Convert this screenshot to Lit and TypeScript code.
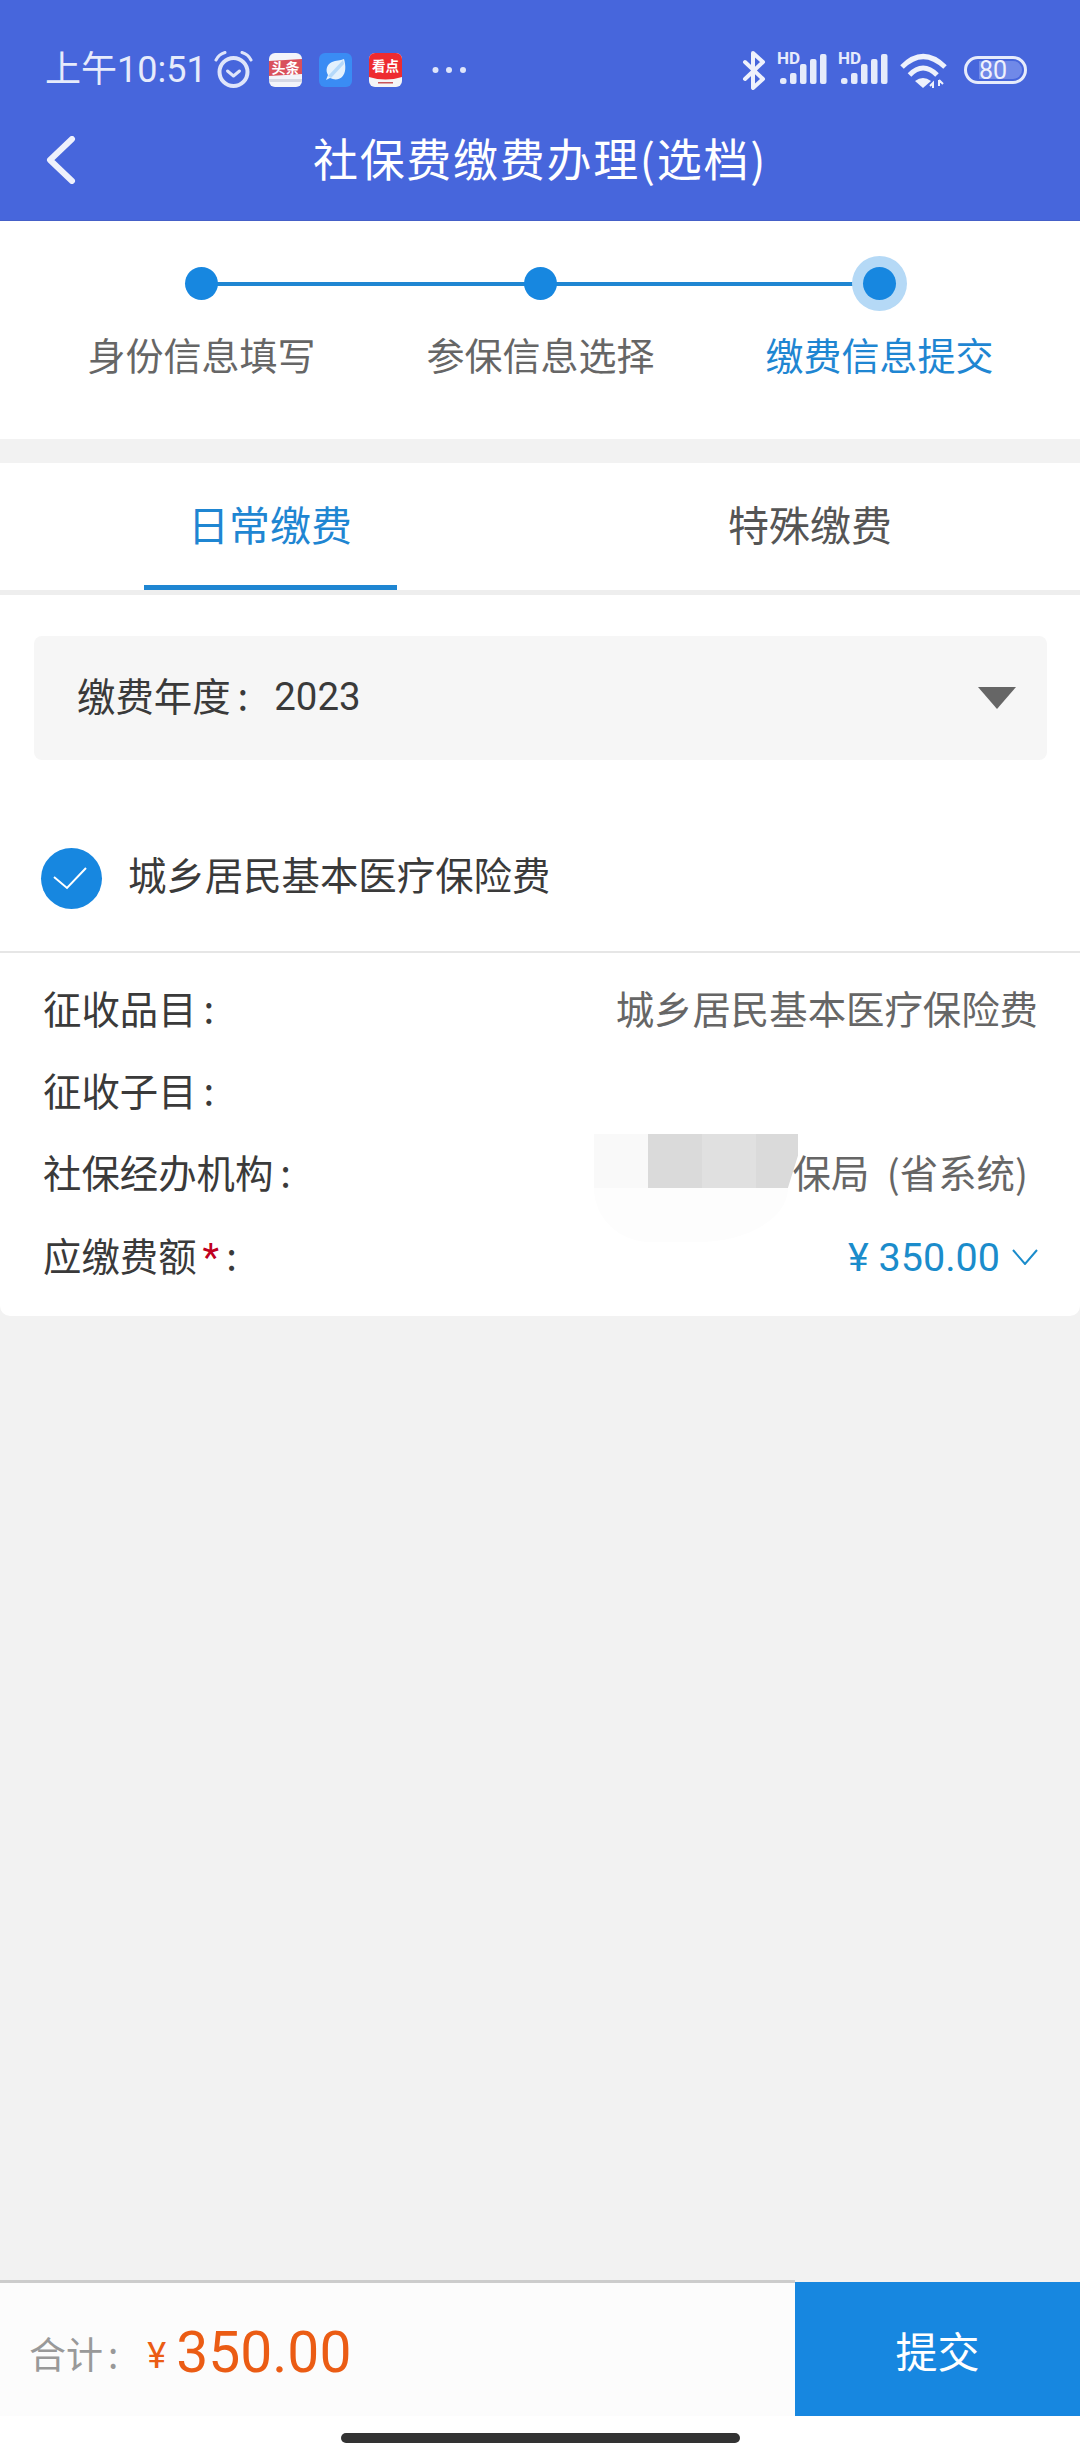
import { LitElement, html, css, svg } from 'lit';
import { customElement } from 'lit/decorators.js';

const CJK = `"Noto Sans CJK SC", sans-serif`;

const signal = svg`
  <text x="0" y="12" class="hd">HD</text>
  <rect x="3" y="26" width="6.500" height="6" rx="2.500"></rect>
  <rect x="13" y="21" width="6.500" height="11" rx="2"></rect>
  <rect x="23" y="12" width="6.500" height="20" rx="2"></rect>
  <rect x="33" y="7" width="6.500" height="25" rx="2"></rect>
  <rect x="43" y="2" width="6.500" height="30" rx="2"></rect>
`;

@customElement('app-root')
export class AppRoot extends LitElement {
  static styles = css`
    :host {
      display: block;
      width: 1080px;
      height: 2460px;
      background: #f2f2f2;
      font-family: "Noto Sans CJK SC", sans-serif;
      color: #3a3a3a;
      overflow: hidden;
    }
    .page { display: flex; flex-direction: column; height: 2460px; }

    /* header */
    .header { background: #4766dc; height: 221px; box-sizing: border-box; border-bottom: 1px solid #4560c8; padding-top: 40px; }
    .status { height: 60px; display: flex; align-items: center; padding: 0 53px 0 45px; color: #e6ebfb; }
    .time { font-size: 36px; line-height: 60px; font-family: Roboto, "Noto Sans CJK SC", sans-serif; width: 160px; white-space: nowrap; }
    .status svg { display: block; flex: none; }
    .alarm { margin-left: 9px; }
    .app { margin-left: 17px; }
    .app.first { margin-left: 16px; }
    .more { margin-left: 30px; }
    .spacer { flex: 1; }
    .status .sig { margin-left: 11px; fill: #e6ebfb; align-self: flex-start; margin-top: 7px; }
    .hd { font: 700 17px Roboto, sans-serif; }
    .wifi { margin-left: 12px; }
    .battery { margin-left: 17px; }
    .nav { height: 120px; display: grid; grid-template-columns: 100px 1fr 100px; align-items: center; }
    .back { margin-left: 46px; display: block; }
    .title { text-align: center; color: #fff; font-size: 45px; letter-spacing: 1.7px; white-space: nowrap; padding-bottom: 5px; }

    /* steps */
    .steps { background: #fff; height: 218px; display: grid; grid-template-columns: repeat(3, 339px); justify-content: center; padding-left: 1px; box-sizing: border-box; }
    .step { position: relative; display: flex; flex-direction: column; align-items: center; padding-top: 46px; }
    .dot { width: 33px; height: 33px; border-radius: 50%; background: #1787e0; position: relative; z-index: 1; }
    .step.on .dot { box-shadow: 0 0 0 11px #b5d9f6; }
    .step .rail { position: absolute; top: 61px; left: 50%; width: 100%; height: 4px; background: #1f86d2; }
    .step-label { margin-top: 27px; font-size: 38px; line-height: 54px; color: #666; white-space: nowrap; }
    .step.on .step-label { color: #1f86d2; }

    /* tabs */
    .tabs { margin-top: 24px; background: #fff; height: 132px; box-sizing: border-box; display: grid; grid-template-columns: 1fr 1fr; border-bottom: 5px solid #eee; }
    .tab { display: flex; justify-content: center; position: relative; font-size: 41px; line-height: 120px; color: #555; }
    .tab.on { color: #1f86d2; }
    .tab.on::after { content: ''; position: absolute; left: 144px; width: 253px; height: 5px; bottom: 0; background: #1f86d2; }

    /* body */
    .body { background: #fff; padding: 41px 0 0; border-radius: 0 0 10px 10px; font-size: 38.4px; }
    .select { margin: 0 33px 0 34px; height: 124px; border-radius: 8px; background: #f6f6f6; display: flex; align-items: center; justify-content: space-between; padding: 0 31px 0 43px; }
    .select .txt { display: flex; align-items: center; padding-bottom: 9px; }
    .select .year { font-family: Roboto, sans-serif; margin-left: 26px; padding-top: 5px; }
    .tri { width: 0; height: 0; border-left: 19px solid transparent; border-right: 19px solid transparent; border-top: 22px solid #666; }
    .check-row { height: 193px; box-sizing: border-box; border-bottom: 2px solid #e6e6e6; display: flex; align-items: center; padding: 45px 0 0 41px; gap: 26px; }
    .check-row .txt { padding-bottom: 10px; }
    .check { width: 61px; height: 61px; border-radius: 50%; background: #1787e0; display: block; flex: none; }
    .details { position: relative; padding: 16px 0 18px; }
    .row { height: 82.33px; padding: 0 42px 0 43px; display: flex; align-items: center; justify-content: space-between; white-space: nowrap; }
    .key, .val { padding-bottom: 7px; }
    .val { color: #666; }
    .colon { margin-left: 7px; }
    .office { word-spacing: 9px; margin-right: 10px; }
    .req { color: #c00020; margin-left: 6px; font-family: Roboto, sans-serif; }
    .fee { color: #1b8ccb; display: flex; align-items: center; font-family: Roboto, sans-serif; font-size: 39.5px; }
    .fee svg { margin-left: 12px; display: block; }
    .mosaic { position: absolute; left: 594px; top: 181px; width: 204px; height: 54px; display: flex; }
    .mosaic i { display: block; height: 54px; width: 54px; }
    .mosaic .a { background: #f9f9f9; }
    .mosaic .b { background: #dadada; }
    .mosaic .c { background: #e0e0e0; }
    .mosaic .d { background: #dadada; width: 42px; clip-path: polygon(0 0, 100% 0, 100% 40%, 76% 100%, 0 100%); }
    .smear { position: absolute; left: 594px; top: 235px; width: 194px; height: 54px; background: #fdfdfd; border-radius: 0 0 90px 56px / 0 0 54px 54px; }

    /* footer */
    .grow { flex: 1; }
    .footer { height: 136px; display: grid; grid-template-columns: 795px 285px; }
    .total { background: #fcfcfc; border-top: 3px solid #ccc; display: flex; align-items: baseline; padding: 41px 0 0 29px; box-sizing: border-box; white-space: nowrap; }
    .total .lab { font-size: 37px; color: #999; transform: translateY(-3px); }
    .total .lab i { font-style: normal; margin-left: 5px; }
    .total .yen { font: 36px Roboto, sans-serif; color: #eb5c14; margin-left: 29px; transform: translateY(-4px); }
    .total .num { font: 57px/57px Roboto, sans-serif; color: #eb5c14; margin-left: 10px; }
    .submit { margin-top: 2px; background: #1787e0; color: #fff; font-size: 42px; display: flex; align-items: center; justify-content: center; }
    .home { height: 44px; background: #fff; display: flex; justify-content: center; padding-top: 17px; box-sizing: border-box; }
    .home i { display: block; width: 399px; height: 10px; border-radius: 5px; background: #333; }
  `;

  renderStatus() {
    return html`
      <div class="status">
        <span class="time">上午10:51</span>
        <svg class="alarm" width="39" height="38" viewBox="0 0 39 38" fill="none" stroke="#dfe5fa">
          <circle cx="19.500" cy="21" r="14" stroke-width="4"></circle>
          <path d="M13.500 20l6 5 6-5" stroke-width="3" stroke-linecap="round" stroke-linejoin="round"></path>
          <path d="M2 9Q5 3 11 1.500M37 9Q34 3 28 1.500" stroke-width="3" stroke-linecap="round"></path>
        </svg>
        <svg class="app first" width="33" height="34" viewBox="0 0 33 34">
          <rect width="33" height="34" rx="6" fill="#f3f4fa"></rect>
          <path d="M0 8L33 6V21L0 23Z" fill="#d9505c"></path>
          <rect y="26" width="33" height="3" fill="#d6d8e4"></rect>
          <text x="16.500" y="20" text-anchor="middle" font-size="14" font-weight="700" fill="#fff" font-family=${CJK}>头条</text>
        </svg>
        <svg class="app" width="33" height="34" viewBox="0 0 33 34">
          <rect width="33" height="34" rx="6" fill="#3a8cf4"></rect>
          <path d="M25 6C27 13 27 20 23 24C20 27 15 27 11 25L7 27L9 22C6 17 8 11 13 9C17 7 21 8 25 6Z" fill="#e4f1fd"></path>
          <path d="M24 7L9 23L12 25L25 11Z" fill="#b5d9fa"></path>
        </svg>
        <svg class="app" width="33" height="34" viewBox="0 0 33 34">
          <rect width="33" height="34" rx="6" fill="#f5f5f7"></rect>
          <path d="M6 0H27A6 6 0 0 1 33 6V24Q16.500 29 0 24V6A6 6 0 0 1 6 0Z" fill="#ee2b30"></path>
          <text x="16.500" y="18" text-anchor="middle" font-size="13.500" font-weight="700" fill="#fff" font-family=${CJK}>看点</text>
          <rect x="9" y="29" width="15" height="1.500" fill="#c8565c"></rect>
        </svg>
        <svg class="more" width="34" height="8" viewBox="0 0 34 8" fill="#dfe5fa">
          <circle cx="3.500" cy="4" r="3"></circle><circle cx="17" cy="4" r="3"></circle><circle cx="31" cy="4" r="3"></circle>
        </svg>
        <span class="spacer"></span>
        <svg width="24" height="39" viewBox="0 0 24 39" fill="none" stroke="#eef1fc" stroke-width="4" stroke-linejoin="round" stroke-linecap="round">
          <path d="M3 11L21 28L11 37V2L21 11L3 28"></path>
        </svg>
        <svg class="sig" width="50" height="40" viewBox="0 -5 50 40">${signal}</svg>
        <svg class="sig" width="50" height="40" viewBox="0 -5 50 40">${signal}</svg>
        <svg class="wifi" width="47" height="35" viewBox="0 0 47 35" fill="none" stroke="#eef1fc" stroke-width="5">
          <path d="M2 14Q23 -7 45 14"></path>
          <path d="M9.500 22Q23 8 37 22"></path>
          <path d="M15 28Q23 22 31 28L23 35Z" fill="#eef1fc" stroke="none"></path>
          <path d="M33 35V30L30 33M39 27V33M39 27L43 31" stroke-width="2"></path>
        </svg>
        <svg class="battery" width="63" height="28" viewBox="0 0 63 28">
          <rect x="1.500" y="1.500" width="60" height="25" rx="12.500" fill="none" stroke="#e6ebfb" stroke-width="3"></rect>
          <path d="M15 5H49A9 9 0 0 1 49 23H15Z" fill="#7089e8"></path>
          <text x="29" y="22.500" text-anchor="middle" font-size="25" fill="#eef1fc" font-family="Roboto, sans-serif">80</text>
        </svg>
      </div>`;
  }

  render() {
    const steps = ['身份信息填写', '参保信息选择', '缴费信息提交'];
    return html`
      <div class="page">
        <div class="header">
          ${this.renderStatus()}
          <div class="nav">
            <svg class="back" width="30" height="48" viewBox="0 0 30 48" fill="none" stroke="#eef1fc" stroke-width="6" stroke-linecap="round" stroke-linejoin="round">
              <path d="M26 3L4 24L26 45"></path>
            </svg>
            <div class="title">社保费缴费办理(选档)</div>
            <span></span>
          </div>
        </div>

        <div class="steps">
          ${steps.map((s, i) => html`
            <div class="step ${i === 2 ? 'on' : ''}">
              ${i < 2 ? html`<span class="rail"></span>` : ''}
              <span class="dot"></span>
              <span class="step-label">${s}</span>
            </div>`)}
        </div>

        <div class="tabs">
          <div class="tab on">日常缴费</div>
          <div class="tab">特殊缴费</div>
        </div>

        <div class="body">
          <div class="select">
            <span class="txt">缴费年度<span class="colon">:</span><span class="year">2023</span></span>
            <span class="tri"></span>
          </div>
          <div class="check-row">
            <svg class="check" viewBox="0 0 61 61" fill="none" stroke="#fff" stroke-width="2">
              <path d="M13 29L26 40L45 20"></path>
            </svg>
            <span class="txt">城乡居民基本医疗保险费</span>
          </div>
          <div class="details">
            <div class="row"><span class="key">征收品目<span class="colon">:</span></span><span class="val">城乡居民基本医疗保险费</span></div>
            <div class="row"><span class="key">征收子目<span class="colon">:</span></span></div>
            <div class="row"><span class="key">社保经办机构<span class="colon">:</span></span><span class="val office">保局 (省系统)</span></div>
            <div class="row">
              <span class="key">应缴费额<span class="req">*</span><span class="colon">:</span></span>
              <span class="fee">¥ 350.00
                <svg width="26" height="16" viewBox="0 0 26 16" fill="none" stroke="#1b8ccb" stroke-width="2"><path d="M1 1L13 15L25 1"></path></svg>
              </span>
            </div>
            <div class="smear"></div>
            <div class="mosaic"><i class="a"></i><i class="b"></i><i class="c"></i><i class="d"></i></div>
          </div>
        </div>

        <div class="grow"></div>

        <div class="footer">
          <div class="total">
            <span class="lab">合计<i>:</i></span>
            <span class="yen">¥</span>
            <span class="num">350.00</span>
          </div>
          <div class="submit">提交</div>
        </div>
        <div class="home"><i></i></div>
      </div>
    `;
  }
}
